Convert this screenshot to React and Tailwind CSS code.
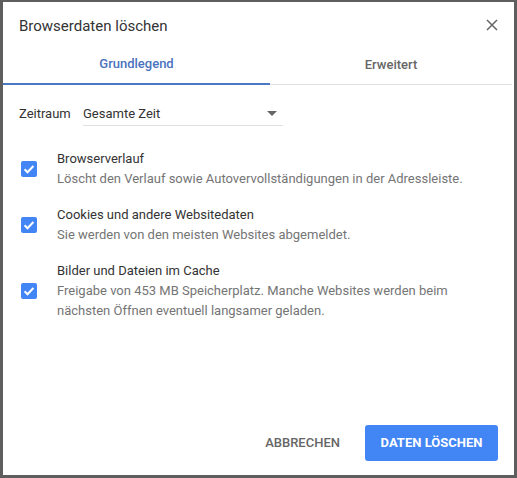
import { useState } from 'react';

const items = [
  { title: 'Browserverlauf', desc: ['Löscht den Verlauf sowie Autovervollständigungen in der Adressleiste.'] },
  { title: 'Cookies und andere Websitedaten', desc: ['Sie werden von den meisten Websites abgemeldet.'] },
  {
    title: 'Bilder und Dateien im Cache',
    desc: ['Freigabe von 453 MB Speicherplatz. Manche Websites werden beim', 'nächsten Öffnen eventuell langsamer geladen.'],
  },
];

function Checkbox({ checked, onChange }) {
  return (
    <button
      onClick={onChange}
      className={`flex h-4 w-4 shrink-0 items-center justify-center rounded-[2px] ${checked ? 'bg-[#4285f4]' : 'border-2 border-[#5f6368] bg-white'}`}
    >
      {checked ? (
        <svg viewBox="0 0 16 16" className="h-4 w-4">
          <path d="M3.6 8.3l2.9 2.9 5.9-6.2" fill="none" stroke="white" strokeWidth="2" />
        </svg>
      ) : null}
    </button>
  );
}

export default function App() {
  const [tab, setTab] = useState(0);
  const [checked, setChecked] = useState([true, true, true]);

  const toggle = (i) => setChecked((prev) => prev.map((c, j) => (j === i ? !c : c)));

  return (
    <div className="h-[478px] w-[517px] bg-[#5e5e5e] pb-[3px] pl-[3px] pr-[3px] pt-[2px] font-['Roboto',sans-serif]">
      <div className="flex h-full flex-col bg-white">
        <div className="flex items-start justify-between pb-[9px] pl-4 pr-4 pt-[14px]">
          <h1 className="text-[15px] leading-[20px] text-[#333]">Browserdaten löschen</h1>
          <button className="mt-[3px] text-[#666]">
            <svg viewBox="0 0 12 12" className="h-[12px] w-[12px]">
              <path d="M1 1l10 10M11 1L1 11" stroke="currentColor" strokeWidth="1.5" fill="none" />
            </svg>
          </button>
        </div>

        <div className="flex items-end pr-[2px]">
          <button
            onClick={() => setTab(0)}
            className={`flex h-[40px] w-[267px] items-center justify-center text-[13px] font-medium ${tab === 0 ? 'border-b-2 border-[#4a78c2] text-[#4a73bd]' : 'border-b border-[#e0e0e0] text-[#666]'}`}
          >
            Grundlegend
          </button>
          <button
            onClick={() => setTab(1)}
            className={`flex h-[40px] flex-1 items-center justify-center text-[13px] font-medium ${tab === 1 ? 'border-b-2 border-[#4a78c2] text-[#4a73bd]' : 'border-b border-[#e0e0e0] text-[#666]'}`}
          >
            Erweitert
          </button>
        </div>

        <div className="flex items-center pl-4 pt-[17px] text-[13px] text-[#333]">
          <span className="w-[64px]">Zeitraum</span>
          <div className="flex h-[24px] w-[200px] items-center justify-between border-b border-[#e0e0e0] pr-[6px]">
            <span>Gesamte Zeit</span>
            <svg viewBox="0 0 10 5" className="h-[5px] w-[10px]">
              <path d="M0 0h10L5 5z" fill="#666" />
            </svg>
          </div>
        </div>

        <div className="flex flex-col gap-4 pl-[18px] pt-[23px]">
          {items.map((item, i) => (
            <div key={item.title} className="flex items-center gap-5">
              <Checkbox checked={checked[i]} onChange={() => toggle(i)} />
              <div className="text-[13px] leading-[20px]">
                <p className="text-[#333]">{item.title}</p>
                {item.desc.map((line) => (
                  <p key={line} className="text-[#757575]">{line}</p>
                ))}
              </div>
            </div>
          ))}
        </div>

        <div className="mt-auto flex items-center justify-end gap-[9px] pb-[14px] pr-4">
          <button className="h-[36px] px-4 text-[13px] font-medium text-[#666]">ABBRECHEN</button>
          <button className="h-[36px] w-[133px] rounded-[3px] bg-[#4285f4] text-[13px] font-bold text-white">DATEN LÖSCHEN</button>
        </div>
      </div>
    </div>
  );
}
